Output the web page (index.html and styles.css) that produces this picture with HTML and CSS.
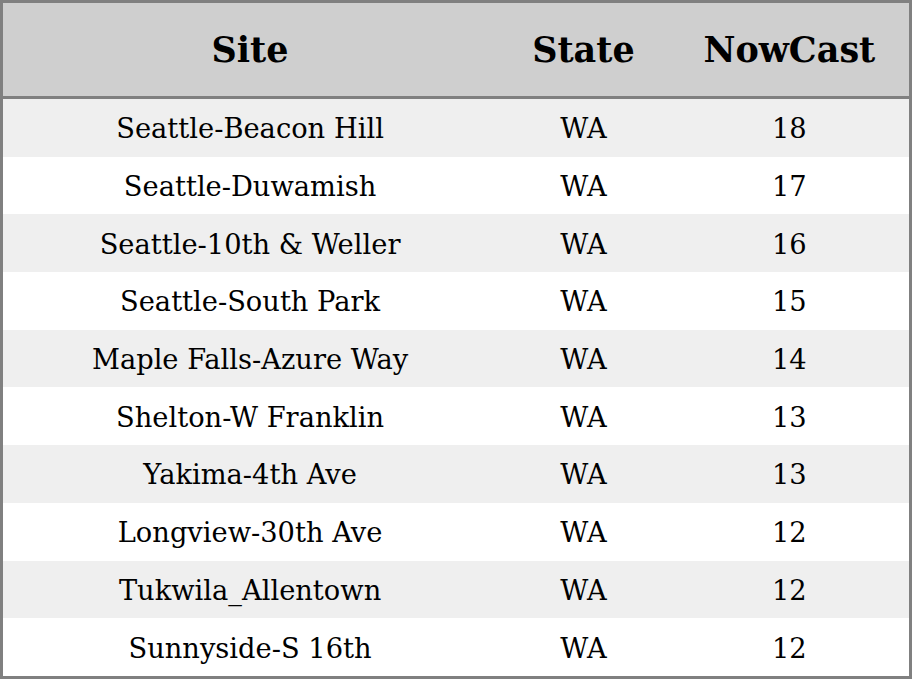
FILE: index.html
```html
<!DOCTYPE html>
<html>
<head>
<meta charset="utf-8">
<link rel="stylesheet" href="styles.css">
</head>
<body>
<table class="aq">
  <colgroup>
    <col class="c-site"><col class="c-state"><col class="c-now">
  </colgroup>
  <thead>
    <tr><th>Site</th><th>State</th><th>NowCast</th></tr>
  </thead>
  <tbody>
    <tr><td>Seattle-Beacon Hill</td><td>WA</td><td>18</td></tr>
    <tr><td>Seattle-Duwamish</td><td>WA</td><td>17</td></tr>
    <tr><td>Seattle-10th &amp; Weller</td><td>WA</td><td>16</td></tr>
    <tr><td>Seattle-South Park</td><td>WA</td><td>15</td></tr>
    <tr><td>Maple Falls-Azure Way</td><td>WA</td><td>14</td></tr>
    <tr><td>Shelton-W Franklin</td><td>WA</td><td>13</td></tr>
    <tr><td>Yakima-4th Ave</td><td>WA</td><td>13</td></tr>
    <tr><td>Longview-30th Ave</td><td>WA</td><td>12</td></tr>
    <tr><td>Tukwila_Allentown</td><td>WA</td><td>12</td></tr>
    <tr><td>Sunnyside-S 16th</td><td>WA</td><td>12</td></tr>
  </tbody>
</table>
</body>
</html>
```
FILE: styles.css
```css
html, body {
  margin: 0;
  padding: 0;
  background: #fff;
}
.aq {
  width: 912px;
  height: 679px;
  border-collapse: collapse;
  border: 3px solid #808080;
  box-sizing: border-box;
  font-family: "DejaVu Serif", serif;
  color: #000;
  table-layout: fixed;
}
.c-site { width: 494px; }
.c-state { width: 172px; }
.c-now { width: 240px; }
.aq th {
  background: #cfcfcf;
  font-weight: bold;
  font-size: 35px;
  height: 93px;
  padding: 0;
  text-align: center;
  border-bottom: 3px solid #808080;
}
.aq td {
  font-size: 27.3px;
  text-align: center;
  padding: 2px 0 0;
  height: 55px;
}
.aq tbody tr:nth-child(odd) { background: #efefef; }
.aq tbody tr:nth-child(even) { background: #fff; }
```
